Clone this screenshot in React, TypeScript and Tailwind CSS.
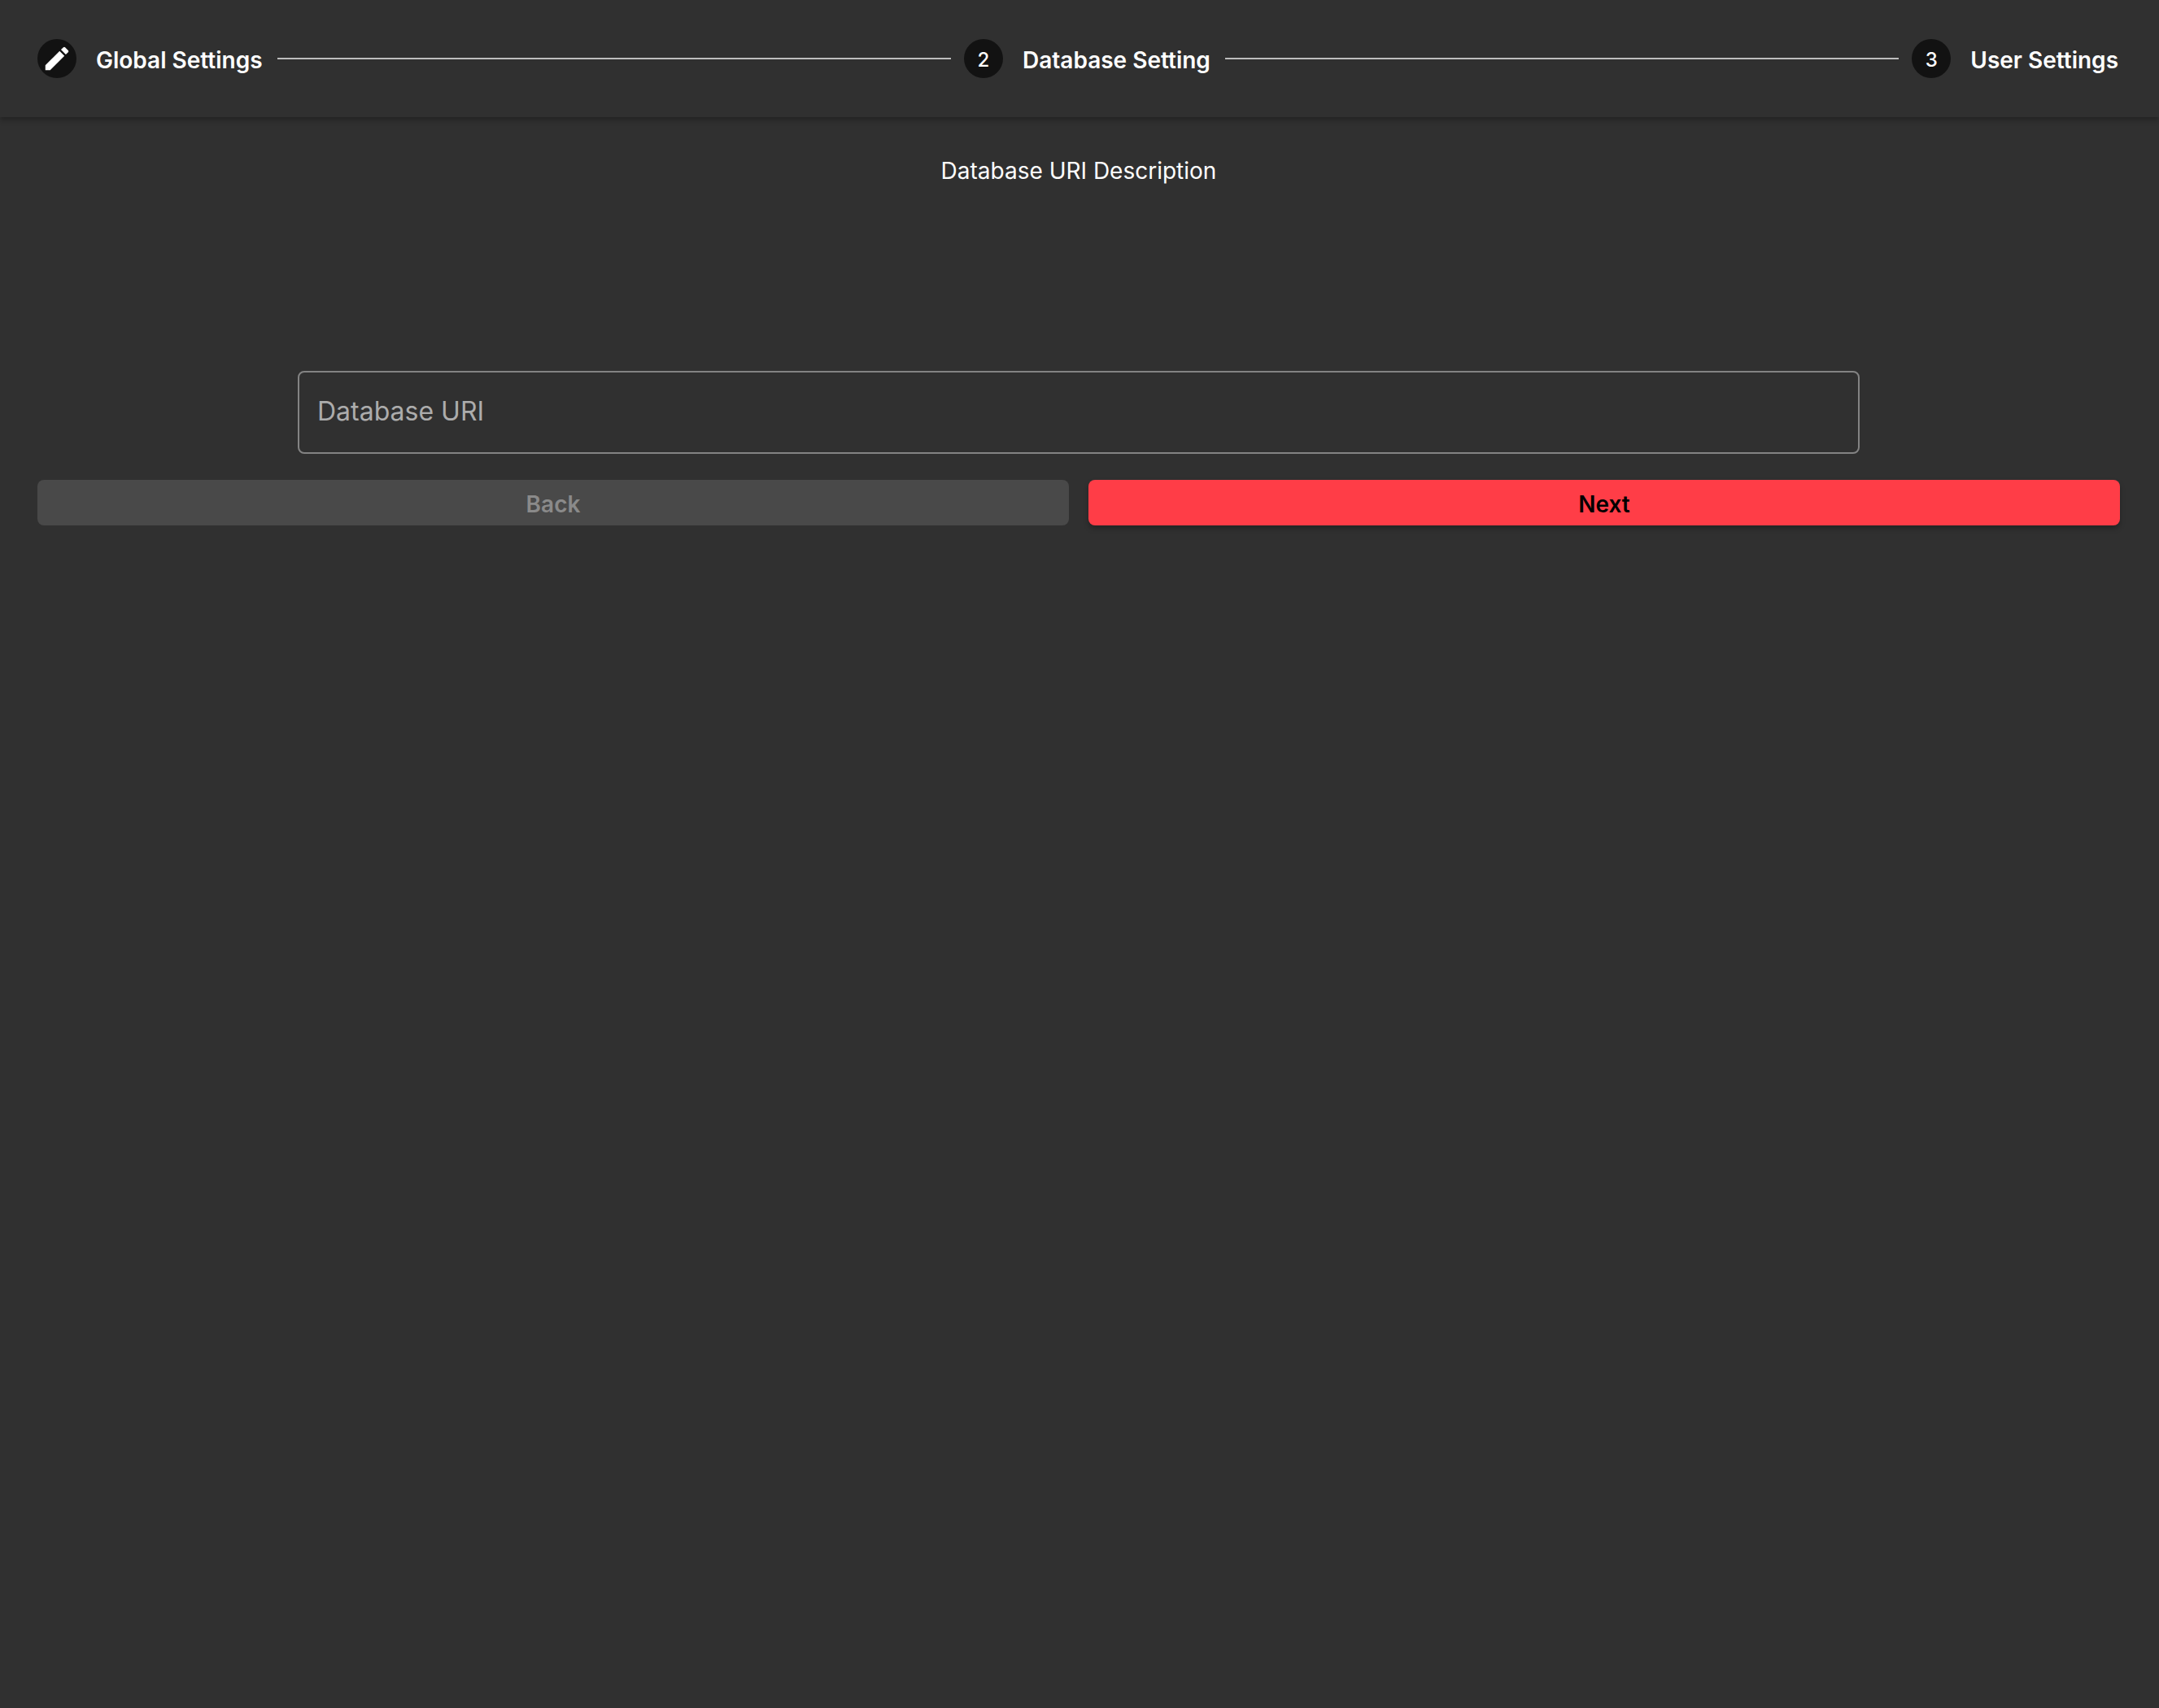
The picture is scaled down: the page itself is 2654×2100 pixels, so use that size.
import { Fragment } from "react";

const steps = [
  { label: "Global Settings", done: true },
  { label: "Database Setting", done: false },
  { label: "User Settings", done: false },
];

function PencilIcon() {
  return (
    <svg viewBox="0 0 24 24" className="size-[38px]" fill="currentColor" aria-hidden="true">
      <path d="M3 17.25V21h3.75L17.81 9.94l-3.75-3.75L3 17.25zM20.71 7.04c.39-.39.39-1.02 0-1.41l-2.34-2.34a.9959.9959 0 0 0-1.41 0l-1.83 1.83 3.75 3.75 1.83-1.83z" />
    </svg>
  );
}

function Stepper() {
  return (
    <header className="shadow-[0_4px_6px_0_rgba(0,0,0,0.26)]">
      <ol className="flex h-36 items-center gap-4 pr-12 pl-[46px]">
        {steps.map((step, i) => (
          <Fragment key={step.label}>
            {i > 0 && <li aria-hidden="true" className="h-[2px] flex-1 bg-[#bdbdbd]" />}
            <li className="flex items-center gap-6">
              <span className="flex size-12 items-center justify-center rounded-full bg-[#121212] text-2xl font-medium">
                {step.done ? <PencilIcon /> : <span className="pt-1">{i + 1}</span>}
              </span>
              <span className="pt-1 pr-[2px] text-[28px] leading-10 font-semibold whitespace-nowrap">
                {step.label}
              </span>
            </li>
          </Fragment>
        ))}
      </ol>
    </header>
  );
}

export default function App() {
  return (
    <div className="flex min-h-screen flex-col bg-[#303030] font-['Inter',sans-serif] text-white">
      <Stepper />
      <main className="flex flex-col pt-[46px] pr-12 pl-[46px]">
        <p className="text-center text-[28px] leading-10">Database URI Description</p>
        <form className="mt-[226px] flex flex-col gap-8" onSubmit={(e) => e.preventDefault()}>
          <input
            type="text"
            aria-label="Database URI"
            placeholder="Database URI"
            className="h-[102px] w-3/4 self-center rounded-lg border-2 border-[#838383] bg-transparent px-[22px] pb-1 text-[32px] text-white outline-none placeholder:text-[#acacac]"
          />
          <div className="grid grid-cols-2 gap-6">
            <button
              type="button"
              disabled
              className="h-14 rounded-lg bg-[#494949] pt-1 text-[28px] font-semibold text-[#8a8a8a]"
            >
              Back
            </button>
            <button
              type="submit"
              className="h-14 rounded-lg bg-[#ff3d47] pt-1 text-[28px] font-semibold text-black shadow-[0_4px_6px_0_rgba(0,0,0,0.26)]"
            >
              Next
            </button>
          </div>
        </form>
      </main>
    </div>
  );
}
